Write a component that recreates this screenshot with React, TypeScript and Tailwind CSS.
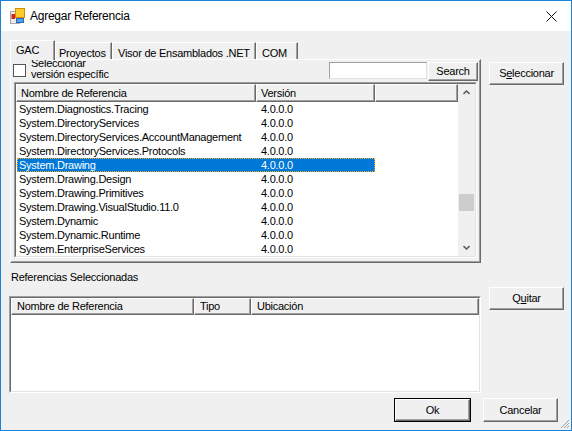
const rows = [
  'System.Diagnostics.Tracing',
  'System.DirectoryServices',
  'System.DirectoryServices.AccountManagement',
  'System.DirectoryServices.Protocols',
  'System.Drawing',
  'System.Drawing.Design',
  'System.Drawing.Primitives',
  'System.Drawing.VisualStudio.11.0',
  'System.Dynamic',
  'System.Dynamic.Runtime',
  'System.EnterpriseServices',
];

const raised =
  'bg-[#f0f0f0] border-t border-l border-r border-b border-t-white border-l-white border-r-[#696969] border-b-[#696969] shadow-[inset_-1px_-1px_0_#a0a0a0]';

const tab =
  'h-[17px] bg-[#f0f0f0] border-t border-l border-r border-t-white border-l-white border-r-[#696969] shadow-[inset_-1px_0_0_#a0a0a0] flex pt-[2px] whitespace-nowrap';

function Button({ children, className, isDefault }: { children: React.ReactNode; className: string; isDefault?: boolean }) {
  return (
    <div className={`${className} ${isDefault ? 'border border-black' : ''} shrink-0`}>
      <div className={`${raised} h-full flex items-center justify-center`}>{children}</div>
    </div>
  );
}

function Sunken({ className, children }: { className: string; children: React.ReactNode }) {
  return (
    <div className={`${className} border border-t-[#a0a0a0] border-l-[#a0a0a0] border-r-white border-b-white`}>
      <div className="h-full border border-t-[#696969] border-l-[#696969] border-r-[#e3e3e3] border-b-[#e3e3e3] bg-white flex flex-col overflow-hidden">
        {children}
      </div>
    </div>
  );
}

function HeaderCell({ label, className }: { label?: string; className: string }) {
  return <div className={`${raised} ${className} h-full pl-[4px] flex items-center whitespace-nowrap overflow-hidden`}>{label}</div>;
}

function Chevron({ up }: { up?: boolean }) {
  return (
    <svg width="7" height="5" viewBox="0 0 7 5">
      <path d={up ? 'M0.5 4 L3.5 1 L6.5 4' : 'M0.5 1 L3.5 4 L6.5 1'} fill="none" stroke="#606060" strokeWidth="1.6" />
    </svg>
  );
}

function WinIcon() {
  return (
    <svg width="16" height="16" viewBox="0 0 16 16">
      <rect x="0.5" y="3.5" width="9" height="12" fill="#ececec" stroke="#a8a8a8" />
      <rect x="1.5" y="6" width="3.5" height="5" fill="#d42020" />
      <rect x="5.5" y="0.5" width="9" height="9" fill="#f9cc2a" stroke="#d88a00" />
      <rect x="6.5" y="10.5" width="7" height="4" fill="#5b9ee8" stroke="#2a68c4" />
    </svg>
  );
}

export default function App() {
  return (
    <div className="relative w-[572px] h-[431px] border border-[#1883d7] bg-[#f0f0f0] flex flex-col overflow-hidden font-['Liberation_Sans',Arial,sans-serif] text-[11px] tracking-[-0.25px] text-black">
      {/* title bar */}
      <div className="h-[30px] bg-white flex items-center pl-[9px] pr-[14px] shrink-0">
        <WinIcon />
        <span className="ml-[4px] text-[12px] text-black">Agregar Referencia</span>
        <div className="flex-1" />
        <svg width="11" height="11" viewBox="0 0 11 11">
          <path d="M0.5 0.5 L10.5 10.5 M10.5 0.5 L0.5 10.5" stroke="#111" strokeWidth="1" />
        </svg>
      </div>

      <div className="flex-1 flex flex-col pl-[8px] pt-[9px]">
        {/* top: tabs + Seleccionar */}
        <div className="flex">
          <div className="ml-[1px] w-[471px] flex flex-col">
            <div className="flex items-end h-[19px]">
              <div className="relative z-10 -mb-px w-[45px] h-[20px] bg-[#f0f0f0] border-t border-l border-r border-t-white border-l-white border-r-[#696969] shadow-[inset_-1px_0_0_#a0a0a0] flex pl-[5px] pt-[1px]">
                GAC
              </div>
              <div className={`${tab} w-[57px] pl-[3px]`}>Proyectos</div>
              <div className={`${tab} w-[144px] pl-[5px]`}>Visor de Ensamblados .NET</div>
              <div className={`${tab} w-[42px] pl-[5px]`}>COM</div>
            </div>
            <div className="h-[204px] border-t border-l border-r border-b border-t-white border-l-white border-r-[#696969] border-b-[#696969] shadow-[inset_-1px_-1px_0_#a0a0a0] flex flex-col">
              <div className="h-[22px] flex items-start shrink-0">
                <div className="ml-[2px] mt-[4px] w-[13px] h-[13px] border border-[#555] bg-white shrink-0" />
                <div className="ml-[5px] w-[78px] h-[20px] overflow-hidden leading-[11px]">
                  <div className="-mt-[2px] whitespace-nowrap">Seleccionar</div>
                  <div className="whitespace-nowrap">versión específica</div>
                </div>
                <div className="flex-1" />
                <div className="mt-[2px] w-[98px] h-[17px] bg-white border border-t-[#a0a0a0] border-l-[#a0a0a0] border-r-[#e3e3e3] border-b-[#e3e3e3]" />
                <Button className="mt-[2px] mr-[2px] ml-[1px] w-[50px] h-[19px]">Search</Button>
              </div>
              <Sunken className="ml-[3px] w-[463px] h-[176px]">
                <div className="flex h-full">
                  <div className="w-[442px] flex flex-col">
                    <div className="h-[18px] flex shrink-0">
                      <HeaderCell label="Nombre de Referencia" className="w-[240px]" />
                      <HeaderCell label="Versión" className="w-[119px]" />
                      <HeaderCell className="flex-1" />
                    </div>
                    {rows.map((r, i) => (
                      <div key={r} className="h-[14px] flex leading-[12px]">
                        {i === 4 ? (
                          <div className="ml-[1px] w-[358px] flex bg-[#0078d7] text-white border border-dotted border-[#f5a623]">
                            <div className="w-[239px] pl-[1px] whitespace-nowrap">{r}</div>
                            <div className="pl-[4px]">4.0.0.0</div>
                          </div>
                        ) : (
                          <div className="flex leading-[14px]">
                            <div className="w-[240px] pl-[3px] whitespace-nowrap">{r}</div>
                            <div className="pl-[5px]">4.0.0.0</div>
                          </div>
                        )}
                      </div>
                    ))}
                  </div>
                  <div className="flex-1 bg-[#f0f0f0] flex flex-col">
                    <div className="h-[17px] flex items-center justify-center">
                      <Chevron up />
                    </div>
                    <div className="flex-1 pt-[93px]">
                      <div className="mx-[1px] h-[17px] bg-[#cdcdcd]" />
                    </div>
                    <div className="h-[17px] flex items-center justify-center">
                      <Chevron />
                    </div>
                  </div>
                </div>
              </Sunken>
            </div>
          </div>
          <Button className="ml-[8px] mt-[22px] w-[75px] h-[23px]">
            <span>
              S<span className="underline">e</span>leccionar
            </span>
          </Button>
        </div>

        {/* lower: selected references */}
        <div className="flex">
          <div className="w-[472px] flex flex-col">
            <div className="mt-[7px] h-[14px] pl-[2px] leading-[14px]">Referencias Seleccionadas</div>
            <Sunken className="mt-[12px] h-[97px]">
              <div className="h-[17px] flex shrink-0">
                <HeaderCell label="Nombre de Referencia" className="w-[183px] pl-[5px]" />
                <HeaderCell label="Tipo" className="w-[57px] pl-[5px]" />
                <HeaderCell label="Ubicación" className="w-[228px] pl-[5px]" />
              </div>
            </Sunken>
          </div>
          <Button className="ml-[8px] mt-[24px] w-[75px] h-[23px]">
            <span>
              Q<span className="underline">u</span>itar
            </span>
          </Button>
        </div>

        {/* bottom buttons */}
        <div className="mt-[5px] flex justify-end pr-[13px]">
          <Button isDefault className="w-[77px] h-[24px]">Ok</Button>
          <Button className="ml-[12px] w-[75px] h-[24px]">Cancelar</Button>
        </div>
      </div>

      <svg className="absolute right-[1px] bottom-[1px]" width="11" height="11" viewBox="0 0 11 11">
        <path d="M10 2 L2 10 M10 5 L5 10 M10 8 L8 10" stroke="#a0a0a0" strokeWidth="1" />
      </svg>
    </div>
  );
}
